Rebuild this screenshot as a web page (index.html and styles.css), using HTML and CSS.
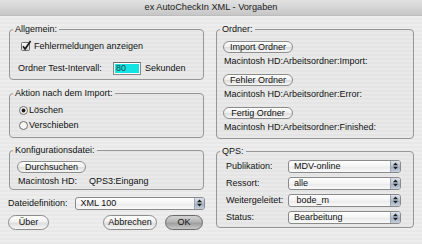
FILE: index.html
```html
<!DOCTYPE html>
<html>
<head>
    <title>ex AutoCheckIn XML - Vorgaben</title>
    <link rel="stylesheet" href="styles.css">
</head>
<body>
    <div class="window">
        <div class="titlebar">ex AutoCheckIn XML - Vorgaben</div>
        <div class="content">
            <div class="column">
                <fieldset class="group group-general">
                    <legend>Allgemein:</legend>
                    <div class="row check-row">
                        <svg class="checkbox" width="11" height="11" viewBox="0 0 11 11">
                            <defs>
                                <linearGradient id="boxFill" x1="0" y1="0" x2="0" y2="1">
                                    <stop offset="0" stop-color="#ffffff"/>
                                    <stop offset="1" stop-color="#d6d6d6"/>
                                </linearGradient>
                            </defs>
                            <rect x="0.5" y="2.5" width="8" height="8" rx="1" fill="url(#boxFill)" stroke="#6f6f6f"/>
                            <path d="M2 6.3 L4.1 9 L9.6 1" fill="none" stroke="#1e1e1e" stroke-width="1.7"/>
                        </svg>
                        <span>Fehlermeldungen anzeigen</span>
                    </div>
                    <div class="row interval-row">
                        <span>Ordner Test-Intervall:</span>
                        <span class="textfield"><span class="textfield-inner">80</span></span>
                        <span>Sekunden</span>
                    </div>
                </fieldset>

                <fieldset class="group group-action">
                    <legend>Aktion nach dem Import:</legend>
                    <div class="row radio-row">
                        <svg class="radio" width="9" height="9" viewBox="0 0 9 9">
                            <circle cx="4.5" cy="4.5" r="4" fill="#f2f2f2" stroke="#6f6f6f"/>
                            <circle cx="4.5" cy="4.5" r="1.9" fill="#1e1e1e"/>
                        </svg>
                        <span>Löschen</span>
                    </div>
                    <div class="row radio-row">
                        <svg class="radio" width="9" height="9" viewBox="0 0 9 9">
                            <circle cx="4.5" cy="4.5" r="4" fill="#f6f6f6" stroke="#6f6f6f"/>
                        </svg>
                        <span>Verschieben</span>
                    </div>
                </fieldset>

                <fieldset class="group group-config">
                    <legend>Konfigurationsdatei:</legend>
                    <button class="button">Durchsuchen</button>
                    <div class="path config-path">
                        <span>Macintosh HD:</span>
                        <span class="path-folder">QPS3:Eingang</span>
                    </div>
                </fieldset>

                <div class="row definition-row">
                    <span>Dateidefinition:</span>
                    <div class="popup popup-wide">
                        <span class="popup-value">XML 100</span>
                        <span class="popup-arrows">
                            <svg width="5" height="8" viewBox="0 0 5 8"><path d="M0 3.2 L2.5 0.4 L5 3.2 Z M0 4.8 L2.5 7.6 L5 4.8 Z" fill="#1e1e1e"/></svg>
                        </span>
                    </div>
                </div>

                <div class="row action-row">
                    <button class="button button-large about">Über</button>
                    <div class="action-right">
                        <button class="button button-large cancel">Abbrechen</button>
                        <button class="button button-large button-default ok">OK</button>
                    </div>
                </div>
            </div>

            <div class="column">
                <fieldset class="group group-folders">
                    <legend>Ordner:</legend>
                    <div class="folder">
                        <button class="button folder-button">Import Ordner</button>
                        <div class="path">Macintosh HD:Arbeitsordner:Import:</div>
                    </div>
                    <div class="folder">
                        <button class="button folder-button">Fehler Ordner</button>
                        <div class="path">Macintosh HD:Arbeitsordner:Error:</div>
                    </div>
                    <div class="folder">
                        <button class="button folder-button">Fertig Ordner</button>
                        <div class="path">Macintosh HD:Arbeitsordner:Finished:</div>
                    </div>
                </fieldset>

                <fieldset class="group group-qps">
                    <legend>QPS:</legend>
                    <div class="row qps-row">
                        <span class="qps-label">Publikation:</span>
                        <div class="popup popup-qps">
                            <span class="popup-value">MDV-online</span>
                            <span class="popup-arrows">
                                <svg width="5" height="8" viewBox="0 0 5 8"><path d="M0 3.2 L2.5 0.4 L5 3.2 Z M0 4.8 L2.5 7.6 L5 4.8 Z" fill="#1e1e1e"/></svg>
                            </span>
                        </div>
                    </div>
                    <div class="row qps-row">
                        <span class="qps-label">Ressort:</span>
                        <div class="popup popup-qps">
                            <span class="popup-value">alle</span>
                            <span class="popup-arrows">
                                <svg width="5" height="8" viewBox="0 0 5 8"><path d="M0 3.2 L2.5 0.4 L5 3.2 Z M0 4.8 L2.5 7.6 L5 4.8 Z" fill="#1e1e1e"/></svg>
                            </span>
                        </div>
                    </div>
                    <div class="row qps-row">
                        <span class="qps-label">Weitergeleitet:</span>
                        <div class="popup popup-qps">
                            <span class="popup-value">&nbsp;bode_m</span>
                            <span class="popup-arrows">
                                <svg width="5" height="8" viewBox="0 0 5 8"><path d="M0 3.2 L2.5 0.4 L5 3.2 Z M0 4.8 L2.5 7.6 L5 4.8 Z" fill="#1e1e1e"/></svg>
                            </span>
                        </div>
                    </div>
                    <div class="row qps-row">
                        <span class="qps-label">Status:</span>
                        <div class="popup popup-qps">
                            <span class="popup-value">Bearbeitung</span>
                            <span class="popup-arrows">
                                <svg width="5" height="8" viewBox="0 0 5 8"><path d="M0 3.2 L2.5 0.4 L5 3.2 Z M0 4.8 L2.5 7.6 L5 4.8 Z" fill="#1e1e1e"/></svg>
                            </span>
                        </div>
                    </div>
                </fieldset>
            </div>
        </div>
    </div>
</body>
</html>
```

FILE: styles.css
```css
body {
    margin: 0;
    padding: 0;
    font-family: "Liberation Sans", Arial, sans-serif;
    font-size: 9px;
    color: #111;
}
.window {
    width: 422px;
    height: 244px;
    overflow: hidden;
    background: repeating-linear-gradient(to bottom, #ededed 0, #ededed 2px, #e8e8e8 2px, #e8e8e8 4px);
}
.titlebar {
    height: 16px;
    line-height: 15px;
    text-align: center;
    font-size: 9.2px;
    color: #1a1a1a;
    background: linear-gradient(#e2e2e2, #d2d2d2 60%, #c6c6c6);
    border-bottom: 1px solid #bdbdbd;
    box-sizing: border-box;
}
.content {
    display: grid;
    grid-template-columns: 195px 198px;
    column-gap: 12px;
    padding: 8px 8px 0 9px;
}
.column {
    display: flex;
    flex-direction: column;
}
.row {
    display: flex;
    align-items: center;
    height: 14px;
    white-space: nowrap;
}

/* group boxes */
.group {
    margin: 0;
    padding: 0 7px;
    border: 1px solid #979797;
    border-radius: 4px;
    background: rgba(0, 0, 0, 0.015);
    display: flex;
    flex-direction: column;
    min-width: 0;
}
.group legend {
    margin-left: -4px;
    padding: 0 2px;
    height: 10px;
    line-height: 10px;
}
.group-general {
    padding-top: 5px;
    padding-bottom: 4px;
    gap: 8px;
}
.group-action {
    margin-top: 8px;
    padding-top: 5px;
    padding-bottom: 5px;
    gap: 1px;
}
.group-config {
    margin-top: 7px;
    padding-top: 6px;
    padding-bottom: 2px;
    gap: 2px;
    align-items: flex-start;
}
.group-folders {
    padding-top: 7px;
    padding-bottom: 5px;
    gap: 7px;
}
.group-qps {
    margin-top: 7px;
    padding-top: 3px;
    padding-bottom: 3px;
    gap: 3px;
}

/* controls */
.check-row {
    margin-left: 4px;
}
.checkbox {
    margin-right: 2px;
    margin-top: -2px;
}
.interval-row {
    margin-left: 1px;
}
.textfield {
    margin-left: 11px;
    margin-right: 4px;
    width: 28px;
    height: 13px;
    box-sizing: border-box;
    border: 1px solid #8a8a8a;
    border-top-color: #6c6c6c;
    background: #fff;
    padding: 1px;
    display: flex;
}
.textfield-inner {
    flex: 1;
    background: #14e3e3;
    line-height: 9px;
    padding-left: 1px;
    color: #244;
}
.radio-row {
    margin-left: 2px;
}
.radio {
    margin-right: 1px;
}
.button {
    height: 12px;
    padding: 0 7px;
    box-sizing: border-box;
    border: 1px solid #8c8c8c;
    border-radius: 7px;
    background: linear-gradient(#ffffff, #f0f0f0 45%, #dedede 55%, #f6f6f6);
    font-family: inherit;
    font-size: 9px;
    line-height: 10px;
    color: #111;
    white-space: nowrap;
    cursor: pointer;
}
.button-large {
    height: 15px;
    line-height: 13px;
    border-radius: 8px;
    padding: 0;
}
.button-default {
    border-color: #6a6a6a;
    background: linear-gradient(#d4d4d4, #b4b4b4 45%, #9e9e9e 55%, #c8c8c8);
}
.about {
    width: 41px;
    margin-left: -1px;
}
.cancel {
    width: 54px;
}
.ok {
    width: 38px;
}
.path {
    height: 12px;
    line-height: 12px;
    white-space: nowrap;
}
.config-path {
    margin-left: 1px;
    display: flex;
}
.path-folder {
    margin-left: 12px;
}
.folder {
    display: flex;
    flex-direction: column;
    align-items: flex-start;
    gap: 2px;
}
.folder-button {
    width: 70px;
    padding: 0;
    margin-left: -1px;
}

/* popups */
.popup {
    height: 13px;
    box-sizing: border-box;
    border: 1px solid #8a8a8a;
    border-radius: 3px;
    background: linear-gradient(#ffffff, #f3f3f3 50%, #e9e9e9 51%, #fafafa);
    display: flex;
    align-items: center;
    overflow: hidden;
}
.popup-value {
    flex: 1;
    padding-left: 5px;
    line-height: 11px;
}
.popup-arrows {
    width: 9px;
    height: 11px;
    display: flex;
    align-items: center;
    justify-content: center;
    background: linear-gradient(#dde3ec, #b2bccb 50%, #9eabbd 51%, #c6cfdb);
    border-left: 1px solid #9ba5b3;
}
.definition-row {
    margin-top: 6px;
    margin-left: -1px;
}
.popup-wide {
    flex: 1;
    margin-left: 7px;
    margin-right: -1px;
}
.action-row {
    margin-top: 5px;
    height: 15px;
    justify-content: space-between;
}
.action-right {
    display: flex;
    gap: 8px;
    margin-right: 1px;
}
.qps-label {
    width: 62px;
    margin-left: 2px;
}
.popup-qps {
    width: 113px;
}
```
